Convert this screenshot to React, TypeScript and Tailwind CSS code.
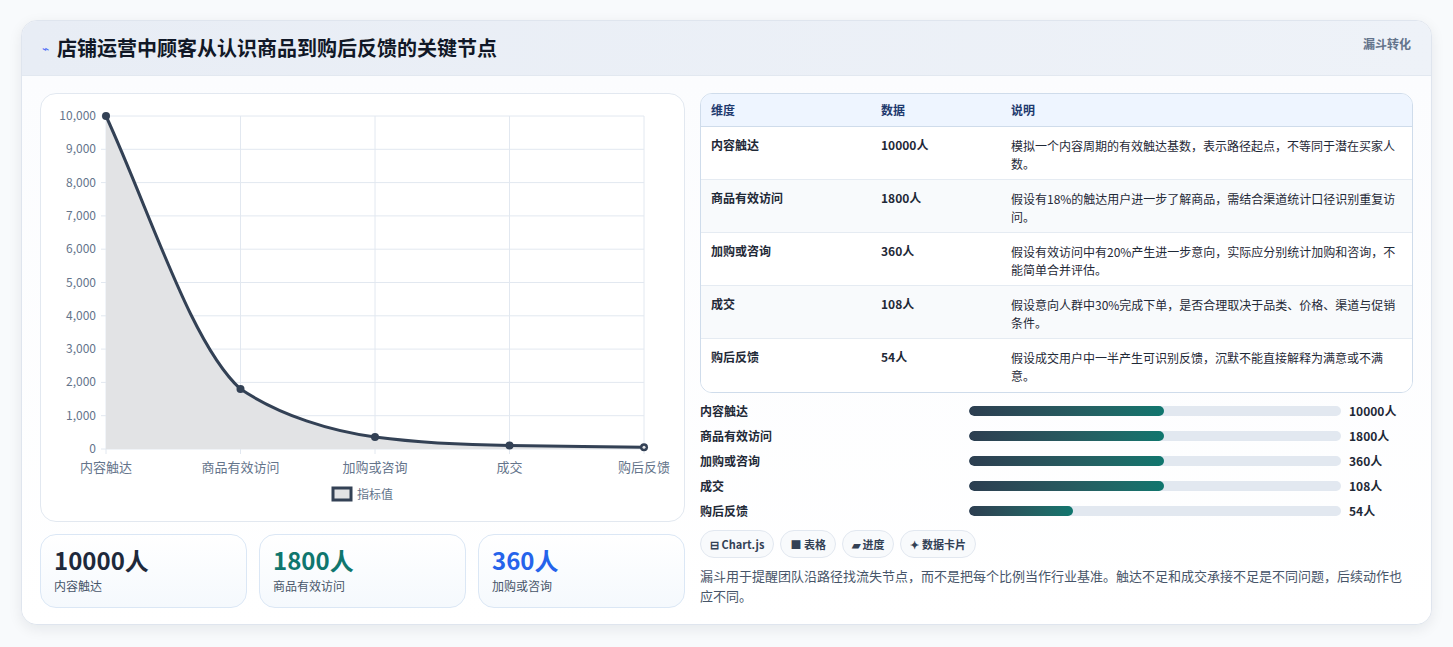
import React from "react";

const F = { fontFamily: '"Noto Sans CJK SC", "Noto Sans", sans-serif' };

const rows = [
  ["内容触达", "10000人", "模拟一个内容周期的有效触达基数，表示路径起点，不等同于潜在买家人数。"],
  ["商品有效访问", "1800人", "假设有18%的触达用户进一步了解商品，需结合渠道统计口径识别重复访问。"],
  ["加购或咨询", "360人", "假设有效访问中有20%产生进一步意向，实际应分别统计加购和咨询，不能简单合并评估。"],
  ["成交", "108人", "假设意向人群中30%完成下单，是否合理取决于品类、价格、渠道与促销条件。"],
  ["购后反馈", "54人", "假设成交用户中一半产生可识别反馈，沉默不能直接解释为满意或不满意。"],
];
const bars = [
  ["内容触达", "10000人", 52.4],
  ["商品有效访问", "1800人", 52.4],
  ["加购或咨询", "360人", 52.4],
  ["成交", "108人", 52.4],
  ["购后反馈", "54人", 28],
];

function Chart() {
  const xs = [65, 199.5, 334, 468.5, 603];
  const vals = [10000, 1800, 360, 108, 54];
  const ys = vals.map((v) => 355 - (v / 10000) * 333);
  const ticks = [0, 1000, 2000, 3000, 4000, 5000, 6000, 7000, 8000, 9000, 10000];
  const line = `M65,22 C110,120 150,250 199.5,${ys[1]} C240,322 290,337 334,${ys[2]} C380,349 430,351 468.5,${ys[3]} C510,352 560,353 603,${ys[4]}`;
  const labels = ["内容触达", "商品有效访问", "加购或咨询", "成交", "购后反馈"];
  return (
    <svg width="644" height="428" className="block">
      {ticks.map((t) => {
        const y = 355 - (t / 10000) * 333;
        return (
          <g key={t}>
            <line x1="60" x2="603" y1={y} y2={y} stroke="#e2e8f0" />
            <text x="55" y={y + 4} textAnchor="end" fontSize="12" fill="#64748b" style={F}>
              {t.toLocaleString("en-US")}
            </text>
          </g>
        );
      })}
      {xs.map((x) => (
        <line key={x} x1={x} x2={x} y1="22" y2="360" stroke="#e2e8f0" />
      ))}
      <path d={`${line} L603,355 L65,355 Z`} fill="#e2e3e5" />
      <path d={line} fill="none" stroke="#334155" strokeWidth="3" />
      {xs.map((x, i) => (
        <circle key={x} cx={x} cy={ys[i]} r="4" fill="#334155" />
      ))}
      <circle cx="603" cy={ys[4]} r="1.5" fill="#e2e3e5" />
      {xs.map((x, i) => (
        <text key={i} x={x} y="378" textAnchor="middle" fontSize="13" fill="#64748b" style={F}>
          {labels[i]}
        </text>
      ))}
      <rect x="292" y="394" width="18" height="12" fill="#e2e3e5" stroke="#334155" strokeWidth="3" />
      <text x="316" y="405" fontSize="12" fill="#64748b" style={F}>指标值</text>
    </svg>
  );
}

export default function App() {
  return (
    <div className="min-h-[647px] bg-[#f8fafc] pt-5 px-[21px]" style={F}>
      <div className="w-[1411px] h-[605px] bg-white rounded-2xl border border-[#dfe5ee] shadow-[0_4px_14px_rgba(15,23,42,0.08)] overflow-hidden">
        <div className="h-[55px] bg-gradient-to-r from-[#e8edf5] to-[#eef2f8] flex items-center justify-between px-5 border-b border-[#e2e8f0]">
          <div className="flex items-center gap-2">
            <span className="text-[#4f6ef7] text-xs">⌁</span>
            <h1 className="text-[20px] font-bold text-[#111827]">店铺运营中顾客从认识商品到购后反馈的关键节点</h1>
          </div>
          <span className="text-xs font-bold text-[#64748b] self-start mt-[15px]">漏斗转化</span>
        </div>
        <div className="flex gap-4 px-[18px] pt-[17px] bg-gradient-to-b from-[#fbfcfe] to-white h-[550px]">
          <div className="w-[645px] flex flex-col gap-3">
            <div className="h-[429px] rounded-2xl border border-[#e2e8f0] bg-white overflow-hidden">
              <Chart />
            </div>
            <div className="grid grid-cols-3 gap-3">
              {[
                ["10000人", "内容触达", "text-[#1e293b]"],
                ["1800人", "商品有效访问", "text-[#0f766e]"],
                ["360人", "加购或咨询", "text-[#2563eb]"],
              ].map(([v, l, c]) => (
                <div key={l} className="h-[74px] rounded-2xl border border-[#dbe7f5] bg-gradient-to-b from-white to-[#f5f9fd] px-[13px] pt-[10px]">
                  <div className={`text-[24px] leading-[30px] font-bold ${c}`}>{v}</div>
                  <div className="text-xs text-[#475569] mt-[3px]">{l}</div>
                </div>
              ))}
            </div>
          </div>
          <div className="flex-1 flex flex-col -ml-[1px]">
            <div className="rounded-xl border border-[#cfdceb] overflow-hidden text-xs">
              <div className="grid grid-cols-[170px_130px_1fr] h-[33px] items-center bg-[#eef5ff] px-[10px] font-bold text-[#1e3a6e] border-b border-[#cfdceb]">
                <div>维度</div><div>数据</div><div>说明</div>
              </div>
              {rows.map((r, i) => (
                <div key={i} className={`grid grid-cols-[170px_130px_1fr] h-[53px] px-[10px] pt-[10px] text-[#1f2937] ${i < 4 ? "border-b border-[#e5ebf2]" : ""} ${i % 2 ? "bg-[#f8fafc]" : "bg-white"}`}>
                  <div className="font-semibold">{r[0]}</div>
                  <div className="font-semibold">{r[1]}</div>
                  <div className="leading-[18px]">{r[2]}</div>
                </div>
              ))}
            </div>
            <div className="mt-[9px] flex flex-col gap-[7px]">
              {bars.map(([l, v, p]) => (
                <div key={l as string} className="flex items-center h-[18px] text-xs font-semibold text-[#1f2937]">
                  <div className="w-[269px]">{l}</div>
                  <div className="w-[372px] h-[10px] rounded-full bg-[#e2e8f0] overflow-hidden">
                    <div className="h-full rounded-full bg-gradient-to-r from-[#2c3e50] to-[#0f766e]" style={{ width: `${p}%` }} />
                  </div>
                  <div className="ml-2 font-bold">{v}</div>
                </div>
              ))}
            </div>
            <div className="flex gap-[6px] mt-[10px]">
              {["⊟ Chart.js", "■ 表格", "▰ 进度", "✦ 数据卡片"].map((c) => (
                <span key={c} className="h-[28px] px-[9px] flex items-center rounded-full border border-[#e2e8f0] bg-[#f8fafc] text-[11px] font-semibold text-[#334155]">{c}</span>
              ))}
            </div>
            <p className="mt-[8px] text-[13px] leading-[20px] text-[#475569]">
              漏斗用于提醒团队沿路径找流失节点，而不是把每个比例当作行业基准。触达不足和成交承接不足是不同问题，后续动作也应不同。
            </p>
          </div>
        </div>
      </div>
    </div>
  );
}
